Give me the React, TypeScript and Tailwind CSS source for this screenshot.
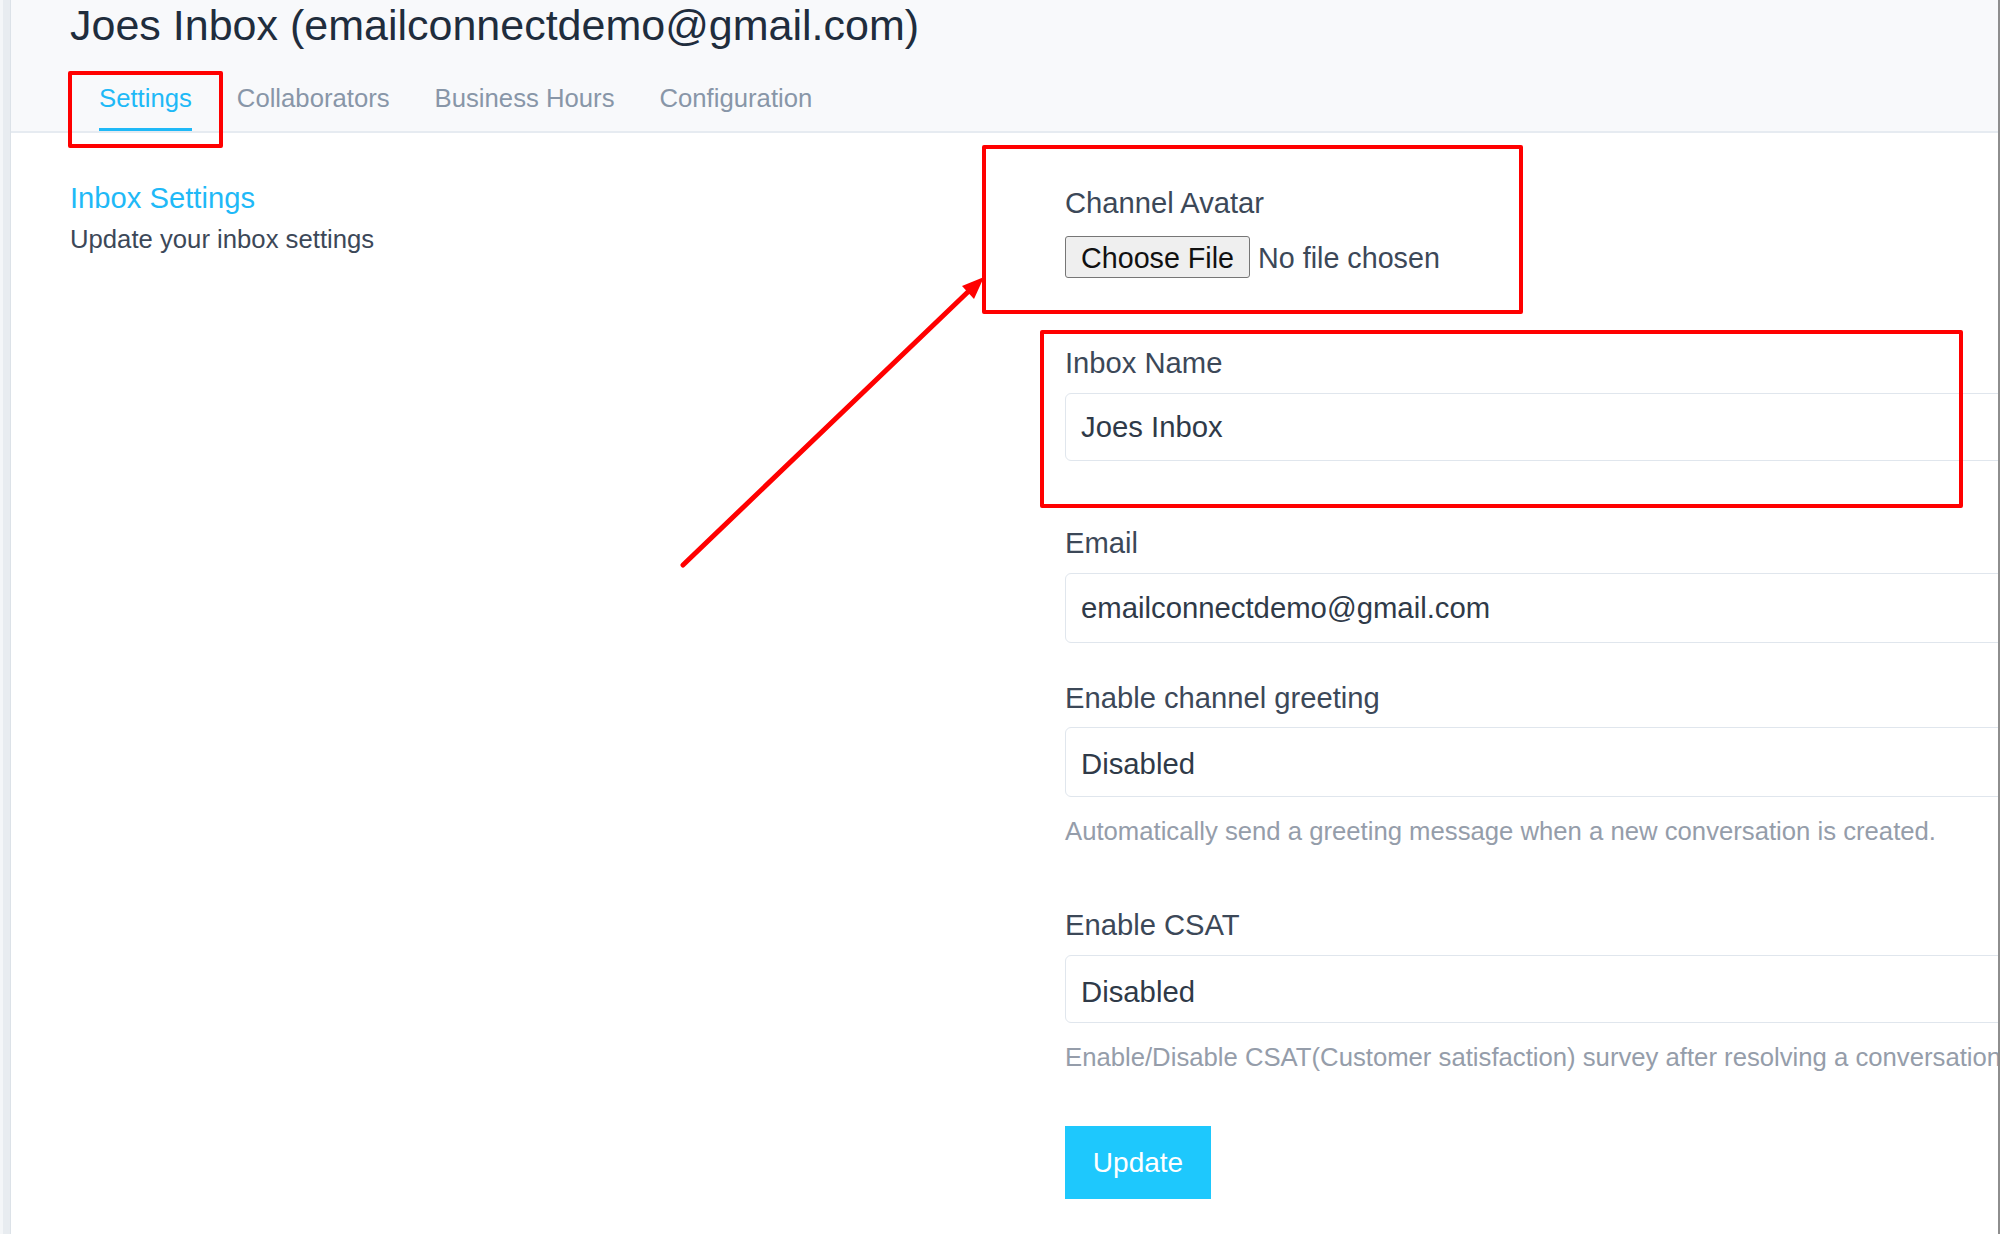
import { useState } from 'react'

const TABS = ['Settings', 'Collaborators', 'Business Hours', 'Configuration'] as const

export default function App() {
  const [activeTab, setActiveTab] = useState<string>('Settings')
  const [inboxName, setInboxName] = useState('Joes Inbox')
  const [email, setEmail] = useState('emailconnectdemo@gmail.com')

  return (
    <div className="relative flex w-[2000px] h-[1234px] overflow-hidden bg-white font-['Liberation_Sans',Arial,sans-serif]">
      {/* Sidebar edge */}
      <div className="w-[11px] shrink-0 bg-[#e8ecf0] border-l-[3px] border-l-[#f4f6f8] border-r border-r-[#dce2e8]" />

      <main className="flex-1 min-w-0 flex flex-col overflow-hidden border-r-2 border-r-[#8e8e8e]">
        {/* Page header */}
        <header className="bg-[#f8f9fb] border-b-2 border-b-[#e6ebf1] pl-[59px]">
          <h1 className="text-[43px] leading-[50px] text-[#1f2d3d] whitespace-nowrap">
            Joes Inbox (emailconnectdemo@gmail.com)
          </h1>
          <nav className="mt-[33px] ml-[29px] flex gap-[45px]">
            {TABS.map((tab) => {
              const active = tab === activeTab
              return (
                <button
                  key={tab}
                  type="button"
                  onClick={() => setActiveTab(tab)}
                  className={
                    active
                      ? 'text-[25.7px] leading-[30px] pb-[15px] border-b-[3px] border-b-[#1fb9f7] text-[#1fb9f7]'
                      : 'text-[25.7px] leading-[30px] pb-[15px] border-b-[3px] border-b-transparent text-[#8896a8]'
                  }
                >
                  {tab}
                </button>
              )
            })}
          </nav>
        </header>

        {/* Settings body */}
        <div className="flex pl-[59px] pt-[47px]">
          <div className="w-[995px] shrink-0">
            <h2 className="text-[29.2px] leading-[36px] text-[#1fb9f7]">Inbox Settings</h2>
            <p className="mt-[8px] text-[25.7px] leading-[30px] text-[#3c4858]">Update your inbox settings</p>
          </div>

          <form className="flex-1 min-w-0 mt-[6px] flex flex-col items-start" onSubmit={(e) => e.preventDefault()}>
            <label className="text-[29.2px] leading-[34px] text-[#3c4858]">Channel Avatar</label>
            <input
              type="file"
              className="mt-[16px] h-[42px] w-[520px] text-[28.7px] text-[#3c4858] file:mr-[8px] file:h-[42px] file:px-[15px] file:border file:border-[#767676] file:rounded-[3px] file:bg-[#efefef] file:text-[#111]"
            />

            <label className="mt-[68px] text-[29.2px] leading-[34px] text-[#3c4858]">Inbox Name</label>
            <input
              value={inboxName}
              onChange={(e) => setInboxName(e.target.value)}
              className="mt-[13px] h-[68px] w-[1000px] shrink-0 rounded-[6px] border border-[#e0e6ed] bg-white px-[15px] text-[29.3px] text-[#2f3a48] outline-none"
            />

            <label className="mt-[65px] text-[29.2px] leading-[34px] text-[#3c4858]">Email</label>
            <input
              value={email}
              onChange={(e) => setEmail(e.target.value)}
              className="mt-[13px] h-[70px] w-[1000px] shrink-0 rounded-[6px] border border-[#e0e6ed] bg-white px-[15px] text-[29.3px] text-[#2f3a48] outline-none"
            />

            <label className="mt-[38px] text-[29.2px] leading-[34px] text-[#3c4858]">Enable channel greeting</label>
            <select className="mt-[12px] h-[70px] w-[1000px] shrink-0 appearance-none rounded-[6px] border border-[#e0e6ed] bg-white px-[15px] pt-[4px] text-[29.3px] text-[#2f3a48] outline-none">
              <option>Disabled</option>
              <option>Enabled</option>
            </select>
            <p className="mt-[19px] text-[25.7px] leading-[30px] text-[#959daa] whitespace-nowrap">
              Automatically send a greeting message when a new conversation is created.
            </p>

            <label className="mt-[62px] text-[29.2px] leading-[34px] text-[#3c4858]">Enable CSAT</label>
            <select className="mt-[13px] h-[68px] w-[1000px] shrink-0 appearance-none rounded-[6px] border border-[#e0e6ed] bg-white px-[15px] pt-[5px] text-[29.3px] text-[#2f3a48] outline-none">
              <option>Disabled</option>
              <option>Enabled</option>
            </select>
            <p className="mt-[19px] text-[25.7px] leading-[30px] text-[#959daa] whitespace-nowrap">
              Enable/Disable CSAT(Customer satisfaction) survey after resolving a conversation
            </p>

            <button
              type="submit"
              className="mt-[54px] h-[73px] w-[146px] bg-[#1ec8fd] text-[28px] text-white"
            >
              Update
            </button>
          </form>
        </div>
      </main>

      {/* Annotation overlay */}
      <div className="pointer-events-none absolute left-[68px] top-[71px] w-[155px] h-[77px] border-4 border-[#ff0000] rounded-[2px]" />
      <div className="pointer-events-none absolute left-[982px] top-[145px] w-[541px] h-[169px] border-4 border-[#ff0000] rounded-[2px]" />
      <div className="pointer-events-none absolute left-[1040px] top-[330px] w-[923px] h-[178px] border-4 border-[#ff0000] rounded-[2px]" />
      <svg className="pointer-events-none absolute inset-0" width="2000" height="1234">
        <line x1="683" y1="565" x2="972" y2="288" stroke="#ff0000" strokeWidth="5" strokeLinecap="round" />
        <polygon points="984,277 974,299 962,286" fill="#ff0000" />
      </svg>
    </div>
  )
}
